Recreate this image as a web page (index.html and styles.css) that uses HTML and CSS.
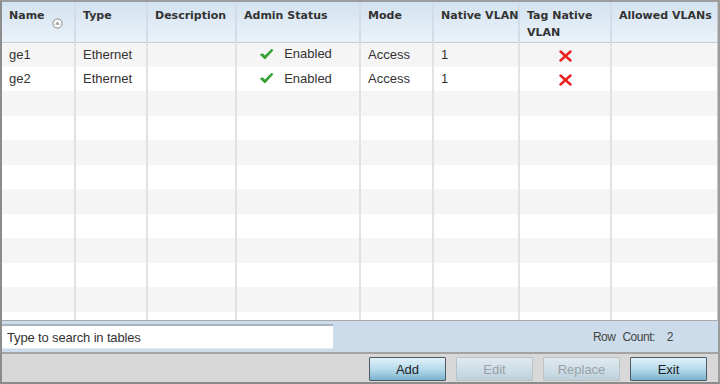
FILE: index.html
```html
<!DOCTYPE html>
<html>
<head>
<meta charset="utf-8">
<link rel="stylesheet" href="styles.css">
</head>
<body>
<div class="frame">
  <div class="grid-area">
    <table class="grid">
      <colgroup>
        <col class="c1"><col class="c2"><col class="c3"><col class="c4"><col class="c5"><col class="c6"><col class="c7"><col class="c8">
      </colgroup>
      <thead>
        <tr>
          <th><span class="name-head">Name <span class="sort"><svg width="11" height="11" viewBox="0 0 11 11"><circle cx="5.5" cy="5.5" r="4.6" fill="#fafafa" stroke="#8a8a8a" stroke-width="1"/><path d="M3.2 6.8 L5.5 3.6 L7.8 6.8 Z" fill="#9a9a9a"/></svg></span></span></th>
          <th>Type</th>
          <th>Description</th>
          <th>Admin Status</th>
          <th>Mode</th>
          <th class="nw">Native VLAN</th>
          <th>Tag Native VLAN</th>
          <th class="nw">Allowed VLANs</th>
        </tr>
      </thead>
      <tbody>
        <tr>
          <td>ge1</td><td>Ethernet</td><td></td>
          <td class="center"><span class="status"><svg class="check" width="15" height="12" viewBox="0 0 15 12"><path d="M0.8 6.6 L3.6 5.2 L5.9 7.6 L12.6 0.8 L14.4 2.2 L6.4 11 L5.2 11 Z" fill="#35a033"/></svg>Enabled</span></td>
          <td>Access</td><td>1</td>
          <td class="center"><svg width="13" height="12" viewBox="0 0 13 12"><path d="M1.5 1.5 L11.5 10.5 M11.5 1.5 L1.5 10.5" stroke="#e8201e" stroke-width="2.4" stroke-linecap="round"/></svg></td>
          <td></td>
        </tr>
        <tr>
          <td>ge2</td><td>Ethernet</td><td></td>
          <td class="center"><span class="status"><svg class="check" width="15" height="12" viewBox="0 0 15 12"><path d="M0.8 6.6 L3.6 5.2 L5.9 7.6 L12.6 0.8 L14.4 2.2 L6.4 11 L5.2 11 Z" fill="#35a033"/></svg>Enabled</span></td>
          <td>Access</td><td>1</td>
          <td class="center"><svg width="13" height="12" viewBox="0 0 13 12"><path d="M1.5 1.5 L11.5 10.5 M11.5 1.5 L1.5 10.5" stroke="#e8201e" stroke-width="2.4" stroke-linecap="round"/></svg></td>
          <td></td>
        </tr>
        <tr><td></td><td></td><td></td><td></td><td></td><td></td><td></td><td></td></tr>
        <tr><td></td><td></td><td></td><td></td><td></td><td></td><td></td><td></td></tr>
        <tr><td></td><td></td><td></td><td></td><td></td><td></td><td></td><td></td></tr>
        <tr><td></td><td></td><td></td><td></td><td></td><td></td><td></td><td></td></tr>
        <tr><td></td><td></td><td></td><td></td><td></td><td></td><td></td><td></td></tr>
        <tr><td></td><td></td><td></td><td></td><td></td><td></td><td></td><td></td></tr>
        <tr><td></td><td></td><td></td><td></td><td></td><td></td><td></td><td></td></tr>
        <tr><td></td><td></td><td></td><td></td><td></td><td></td><td></td><td></td></tr>
        <tr><td></td><td></td><td></td><td></td><td></td><td></td><td></td><td></td></tr>
        <tr><td></td><td></td><td></td><td></td><td></td><td></td><td></td><td></td></tr>
      </tbody>
    </table>
  </div>
  <div class="search-bar">
    <div class="search">Type to search in tables</div>
    <div class="row-count"><span>Row</span><span class="count-label">Count:</span><span class="count-val">2</span></div>
  </div>
  <div class="button-bar">
    <button class="btn">Add</button>
    <button class="btn disabled">Edit</button>
    <button class="btn disabled">Replace</button>
    <button class="btn">Exit</button>
  </div>
</div>
</body>
</html>
```

FILE: styles.css
```css
html, body {
  margin: 0;
  padding: 0;
  background: #ffffff;
}

.frame {
  width: 720px;
  height: 384px;
  box-sizing: border-box;
  border-top: 2px solid #9c9c9c;
  border-left: 2px solid #8c8c8c;
  border-right: 2px solid #9c9c9c;
  border-bottom: 2px solid #8c8c8c;
  display: flex;
  flex-direction: column;
  font-family: "Liberation Sans", Arial, sans-serif;
  color: #333333;
  overflow: hidden;
}

.grid-area {
  height: 318px;
  flex: none;
  overflow: hidden;
  background: #ffffff;
  border-right: 1px solid #c8c8c8;
  border-bottom: 1px solid #a8a8a8;
}

.grid {
  border-collapse: collapse;
  table-layout: fixed;
  width: 715px;
}

.c1 { width: 73px; }
.c2 { width: 72px; }
.c3 { width: 89px; }
.c4 { width: 124px; }
.c5 { width: 73px; }
.c6 { width: 86px; }
.c7 { width: 92px; }
.c8 { width: 106px; }

.grid th {
  height: 40px;
  padding: 5px 2px 0 7px;
  box-sizing: border-box;
  vertical-align: top;
  text-align: left;
  font-family: "DejaVu Sans", Verdana, sans-serif;
  font-weight: bold;
  font-size: 11px;
  line-height: 17px;
  color: #333333;
  background: linear-gradient(#d3e3f1, #ebf2f9);
  border-right: 2px solid #d2dde8;
  border-bottom: 1px solid #c4ccd4;
}

.grid th.nw {
  white-space: nowrap;
}

.grid th:last-child {
  border-right: none;
}

.name-head {
  display: block;
  position: relative;
}

.sort {
  position: absolute;
  left: 43px;
  top: 11px;
  width: 11px;
  height: 11px;
}

.sort svg {
  display: block;
}

.grid td {
  height: 24.5px;
  padding: 0 6px 0 7px;
  box-sizing: border-box;
  font-size: 13px;
  color: #333333;
  white-space: nowrap;
  border-right: 2px solid #e2e2e2;
  vertical-align: middle;
}

.grid td:last-child {
  border-right: none;
}

.grid tbody tr:nth-child(odd) td {
  background: #f5f5f5;
}

.grid tbody tr:nth-child(even) td {
  background: #ffffff;
}

.grid td.center {
  text-align: center;
}

.grid td.center svg {
  vertical-align: middle;
}

.status {
  display: inline-flex;
  align-items: center;
  margin-left: -6px;
}

.check {
  margin-right: 10px;
}

.search-bar {
  height: 31px;
  flex: none;
  background: #cddcea;
  display: flex;
  align-items: center;
  justify-content: space-between;
}

.search {
  width: 331px;
  height: 25px;
  box-sizing: border-box;
  background: #ffffff;
  border-top: 2px solid #a8b4bf;
  border-bottom: 1px solid #e4ebf2;
  font-size: 13px;
  color: #333333;
  padding: 2px 0 0 5px;
  line-height: 19px;
  letter-spacing: -0.15px;
}

.row-count {
  font-size: 12px;
  color: #444444;
  margin-right: 45px;
  letter-spacing: -0.5px;
  display: flex;
}

.count-label {
  margin-left: 7px;
}

.count-val {
  margin-left: 12px;
}

.button-bar {
  flex: 1;
  background: #d8d8d8;
  border-top: 2px solid #a3a3a3;
  display: flex;
  justify-content: flex-end;
  align-items: center;
  gap: 10px;
  padding: 0 11px 0 0;
}

.btn {
  width: 77px;
  height: 24px;
  box-sizing: border-box;
  border: 1px solid #4d5a63;
  border-radius: 1px;
  background: linear-gradient(#e2f1f9, #b3d9ea 55%, #7ab2cc);
  font-family: "Liberation Sans", Arial, sans-serif;
  font-size: 13px;
  color: #222222;
  padding: 0;
  margin-top: 2px;
}

.btn.disabled {
  background: linear-gradient(#e0e9ee, #ccdde6 60%, #bcd0da);
  border-color: #b8c2c8;
  color: #9aa2a8;
}
```
